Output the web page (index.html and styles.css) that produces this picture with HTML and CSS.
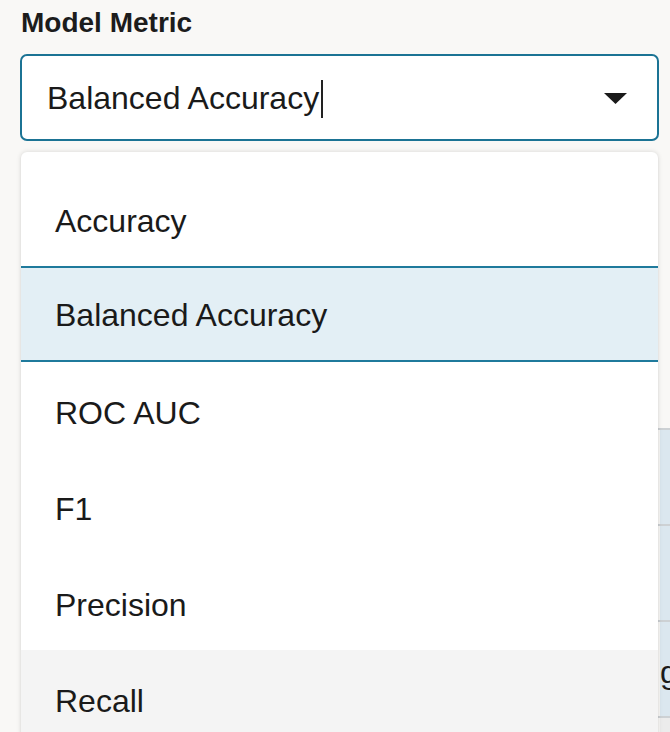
FILE: index.html
```html
<!DOCTYPE html>
<html lang="en">
<head>
<meta charset="utf-8">
<title>Model Metric</title>
<link rel="stylesheet" href="styles.css">
</head>
<body>
<div class="page">
  <div class="field">
    <label class="label">Model Metric</label>
    <div class="select">
      <span class="value">Balanced Accuracy<span class="caret"></span></span>
      <svg class="arrow" width="23" height="11" viewBox="0 0 23 11"><path d="M0 0 H23 L11.5 11 Z" fill="#1a1a1a"/></svg>
    </div>
  </div>

  <div class="table">
    <div class="trow"><div class="tcell hidden"></div><div class="tcell side"></div></div>
    <div class="trow"><div class="tcell hidden"></div><div class="tcell side"></div></div>
    <div class="trow"><div class="tcell hidden"></div><div class="tcell side"><span class="celltext">g</span></div></div>
    <div class="trow last"><div class="tcell hidden"></div><div class="tcell side gray"></div></div>
  </div>

  <ul class="menu">
    <li class="item">Accuracy</li>
    <li class="item selected">Balanced Accuracy</li>
    <li class="item">ROC AUC</li>
    <li class="item">F1</li>
    <li class="item">Precision</li>
    <li class="item hover">Recall</li>
  </ul>
</div>
</body>
</html>
```

FILE: styles.css
```css
html, body {
  margin: 0;
  padding: 0;
  overflow: hidden;
  background: #f9f8f6;
  font-family: "Liberation Sans", Arial, sans-serif;
  color: #1a1a1a;
}

.page {
  position: relative;
  width: 670px;
  height: 732px;
  overflow: hidden;
}

.field {
  display: flex;
  flex-direction: column;
  padding: 6px 11px 0 20px;
}

.label {
  font-size: 28px;
  font-weight: bold;
  line-height: 34px;
  padding-left: 1px;
  color: #1c1c1c;
}

.select {
  margin-top: 14px;
  height: 87px;
  box-sizing: border-box;
  border: 2px solid #1b7394;
  border-radius: 7px;
  background: #ffffff;
  display: flex;
  align-items: center;
  justify-content: space-between;
  padding: 0 30px 0 25px;
}

.value {
  font-size: 32px;
  display: flex;
  align-items: center;
  padding-top: 2px;
}

.caret {
  display: inline-block;
  width: 2px;
  height: 38px;
  background: #222;
  margin-left: 2px;
}

.arrow {
  display: block;
  margin-top: 2px;
}

.table {
  margin: 287px 0 0 24px;
  display: flex;
  flex-direction: column;
}

.trow {
  display: grid;
  grid-template-columns: 636px 1fr;
  height: 96px;
  box-sizing: border-box;
  border-top: 2px solid #cdd1d4;
}

.trow.last {
  height: 40px;
}

.tcell.side {
  background: #dbe7ef;
  font-size: 32px;
  display: flex;
  align-items: center;
  white-space: nowrap;
  overflow: hidden;
}

.tcell.side.gray {
  background: #ececec;
}

.celltext {
  padding-top: 6px;
  color: #1a1a1a;
}

.menu {
  position: absolute;
  left: 21px;
  top: 152px;
  width: 637px;
  height: 640px;
  margin: 0;
  padding: 18px 0 0 0;
  list-style: none;
  background: #ffffff;
  border-radius: 6px;
  box-shadow: 0 0 5px rgba(0, 0, 0, 0.14), 0 1px 2px rgba(0, 0, 0, 0.06);
  box-sizing: border-box;
}

.item {
  height: 96px;
  box-sizing: border-box;
  display: flex;
  align-items: center;
  padding: 6px 0 0 34px;
  font-size: 32px;
  color: #1a1a1a;
}

.item.selected {
  background: #e3eff5;
  border-top: 2px solid #1f7a9c;
  border-bottom: 2px solid #1f7a9c;
  padding-top: 2px;
}

.item.hover {
  background: #f4f4f4;
}
```
